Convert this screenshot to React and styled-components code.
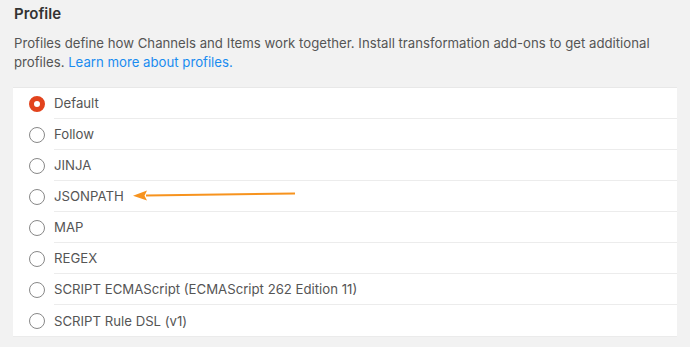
import React from "react";
import styled, { createGlobalStyle } from "styled-components";

const GlobalStyle = createGlobalStyle`
  html, body {
    margin: 0;
    padding: 0;
    background: #f2f2f2;
  }
  body {
    font-family: Inter, "Liberation Sans", sans-serif;
    color: #555;
  }
`;

const profiles = [
  "Default",
  "Follow",
  "JINJA",
  "JSONPATH",
  "MAP",
  "REGEX",
  "SCRIPT ECMAScript (ECMAScript 262 Edition 11)",
  "SCRIPT Rule DSL (v1)",
];

export default function App() {
  return (
    <Page>
      <GlobalStyle />
      <Title>Profile</Title>
      <Description>
        Profiles define how Channels and Items work together. Install transformation add-ons to get
        additional profiles. <Link href="#">Learn more about profiles.</Link>
      </Description>
      <List>
        {profiles.map((name, i) => (
          <Row key={name}>
            <Radio checked={i === 0} />
            <Label last={i === profiles.length - 1}>
              {name}
              {name === "JSONPATH" && <Arrow />}
            </Label>
          </Row>
        ))}
      </List>
    </Page>
  );
}

function Arrow() {
  return (
    <ArrowSvg width="164" height="14" viewBox="0 0 164 14">
      <path d="M14 7.6 L163 5.4" stroke="#f7931e" strokeWidth="2" fill="none" />
      <path d="M1 7.8 L15 2.6 L12.5 7.7 L15 12.6 Z" fill="#f7931e" />
    </ArrowSvg>
  );
}

const Page = styled.div`
  padding: 5px 13px 0 13px;
  width: 664px;
`;

const Title = styled.div`
  font-size: 15px;
  font-weight: 600;
  color: #333;
  margin-left: 1px;
  line-height: 18px;
`;

const Description = styled.p`
  margin: 11px 0 15px 1px;
  font-size: 13.2px;
  line-height: 19px;
  color: #555;
`;

const Link = styled.a`
  color: #1a8cf0;
  text-decoration: none;
`;

const List = styled.div`
  background: #fff;
  border-top: 1px solid #e8e8e8;
  border-bottom: 1px solid #ebebeb;
`;

const Row = styled.div`
  display: flex;
  align-items: stretch;
  height: 31px;
`;

const Radio = styled.span`
  flex: 0 0 auto;
  align-self: center;
  box-sizing: border-box;
  width: 16px;
  height: 16px;
  margin: 0 9px 0 16px;
  border-radius: 50%;
  border: ${(p) => (p.checked ? "5px solid #e2431d" : "1px solid #888")};
  background: #fff;
`;

const Label = styled.div`
  flex: 1;
  position: relative;
  display: flex;
  align-items: center;
  font-size: 13.2px;
  color: #555;
  border-bottom: ${(p) => (p.last ? "none" : "1px solid #ececec")};
`;

const ArrowSvg = styled.svg`
  position: absolute;
  left: 78px;
  top: 7px;
`;
